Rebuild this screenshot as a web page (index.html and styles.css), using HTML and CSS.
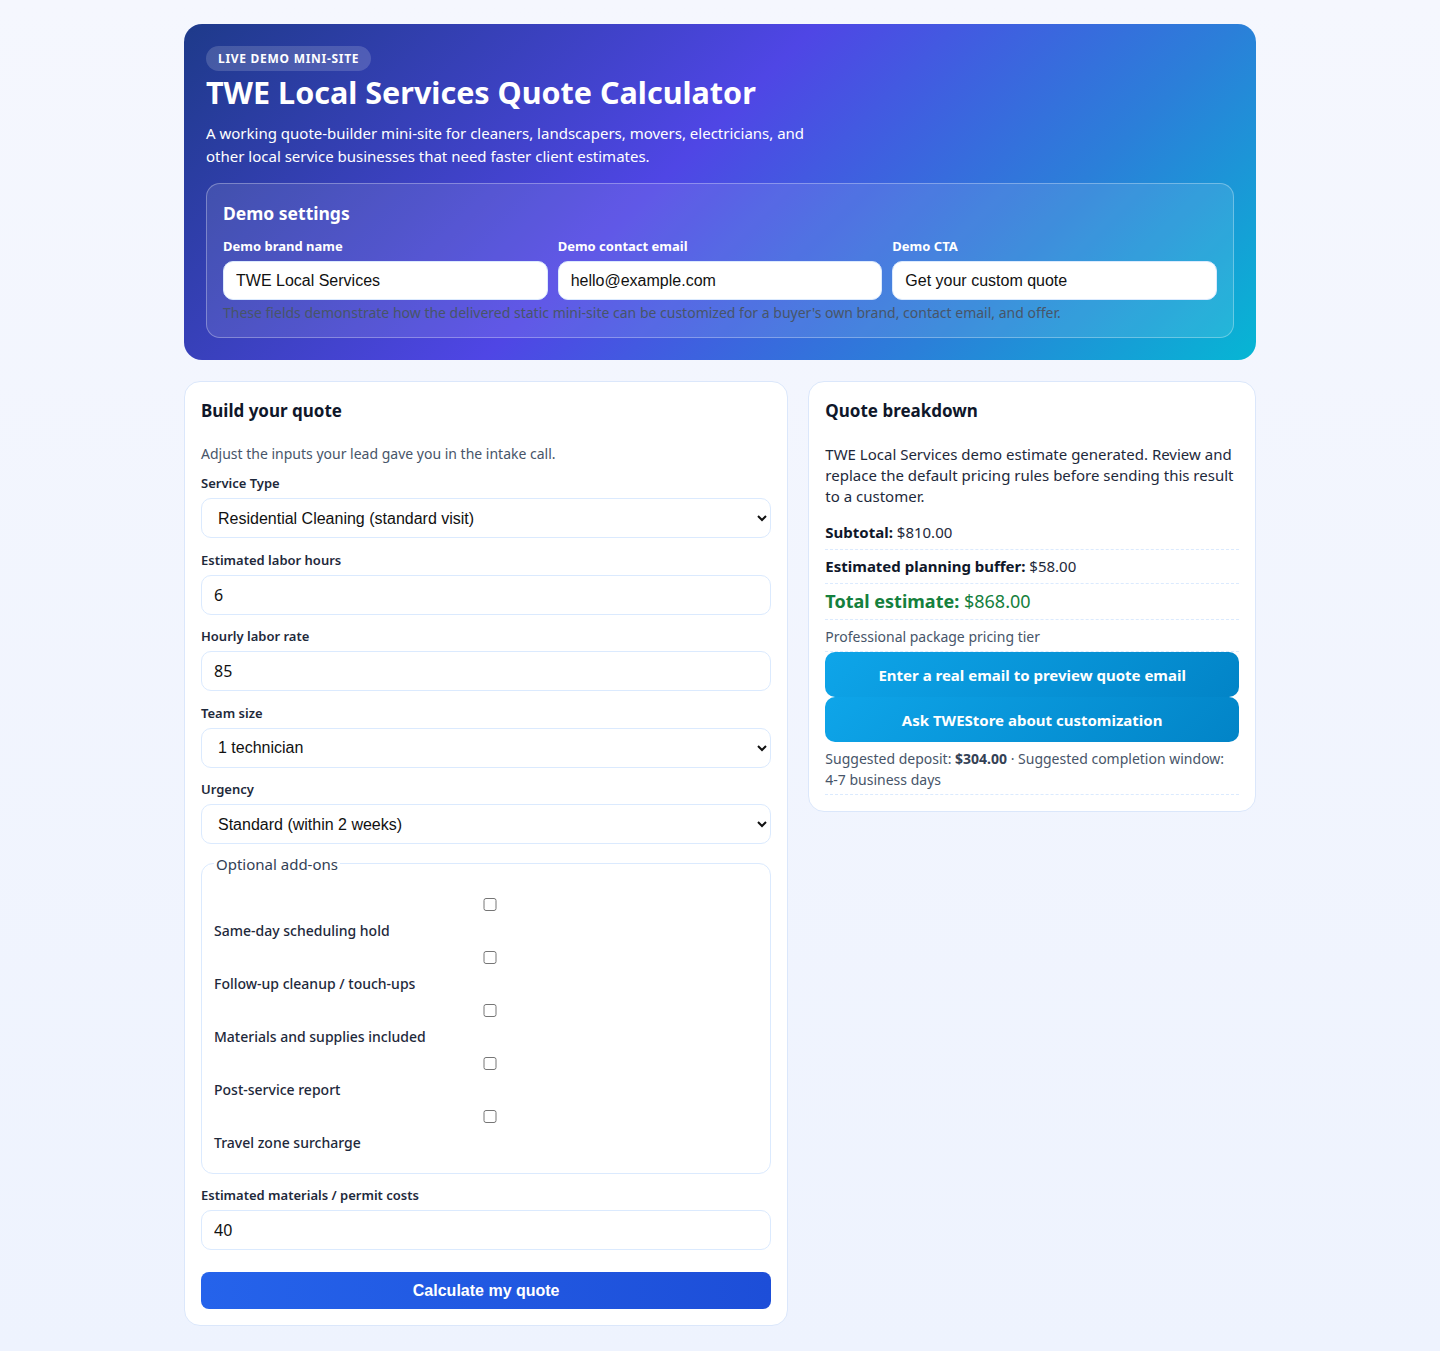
FILE: index.html
```html
<!DOCTYPE html>
<html lang="en">
<head>
  <meta charset="UTF-8">
  <meta name="viewport" content="width=device-width, initial-scale=1.0">
  <title>TWE Local Services Quote Calculator</title>
  <link rel="stylesheet" href="styles.css">
</head>
<body>
<div class="page">
  <header class="hero">
    <span class="badge">LIVE DEMO MINI-SITE</span>
    <h1>TWE Local Services Quote Calculator</h1>
    <p class="lead">A working quote-builder mini-site for cleaners, landscapers, movers, electricians, and other local service businesses that need faster client estimates.</p>

    <div class="settings">
      <h2>Demo settings</h2>
      <div class="settings-grid">
        <label>Demo brand name
          <input type="text" id="brandName" value="TWE Local Services" oninput="calculateQuote()">
        </label>
        <label>Demo contact email
          <input type="text" id="contactEmail" value="hello@example.com">
        </label>
        <label>Demo CTA
          <input type="text" id="ctaText" value="Get your custom quote">
        </label>
      </div>
      <p class="hint">These fields demonstrate how the delivered static mini-site can be customized for a buyer's own brand, contact email, and offer.</p>
    </div>
  </header>

  <main class="layout">
    <section class="card">
      <h3>Build your quote</h3>
      <p class="muted">Adjust the inputs your lead gave you in the intake call.</p>

      <label class="field">Service Type
        <select id="serviceType" onchange="calculateQuote()">
          <option value="1">Residential Cleaning (standard visit)</option>
          <option value="1.2">Deep Cleaning</option>
          <option value="1.1">Landscaping</option>
          <option value="1.3">Moving help</option>
          <option value="1.5">Electrical work</option>
        </select>
      </label>

      <label class="field">Estimated labor hours
        <input type="number" class="num" id="hours" value="6" oninput="calculateQuote()">
      </label>

      <label class="field">Hourly labor rate
        <input type="number" class="num" id="rate" value="85" oninput="calculateQuote()">
      </label>

      <label class="field">Team size
        <select id="team" onchange="calculateQuote()">
          <option value="1">1 technician</option>
          <option value="2">2 technicians</option>
          <option value="3">3 technicians</option>
        </select>
      </label>

      <label class="field">Urgency
        <select id="urgency" onchange="calculateQuote()">
          <option value="1">Standard (within 2 weeks)</option>
          <option value="1.15">Priority (within 1 week)</option>
          <option value="1.35">Rush (within 48 hours)</option>
        </select>
      </label>

      <fieldset class="addons">
        <legend>Optional add-ons</legend>
        <label class="addon"><input type="checkbox" data-cost="75" onchange="calculateQuote()">Same-day scheduling hold</label>
        <label class="addon"><input type="checkbox" data-cost="120" onchange="calculateQuote()">Follow-up cleanup / touch-ups</label>
        <label class="addon"><input type="checkbox" data-cost="90" onchange="calculateQuote()">Materials and supplies included</label>
        <label class="addon"><input type="checkbox" data-cost="35" onchange="calculateQuote()">Post-service report</label>
        <label class="addon"><input type="checkbox" data-cost="50" onchange="calculateQuote()">Travel zone surcharge</label>
      </fieldset>

      <label class="field">Estimated materials / permit costs
        <input type="number" class="num" id="materials" value="40" oninput="calculateQuote()">
      </label>

      <button class="btn-primary" onclick="calculateQuote()">Calculate my quote</button>
    </section>

    <section class="card">
      <h3>Quote breakdown</h3>
      <p class="summary"><span id="brandOut">TWE Local Services</span> demo estimate generated. Review and replace the default pricing rules before sending this result to a customer.</p>
      <div class="row"><strong>Subtotal:</strong> <span id="subtotal">$810.00</span></div>
      <div class="row"><strong>Estimated planning buffer:</strong> <span id="buffer">$58.00</span></div>
      <div class="row total"><strong>Total estimate:</strong> <span id="total">$868.00</span></div>
      <div class="row muted tier">Professional package pricing tier</div>
      <button class="btn-sky">Enter a real email to preview quote email</button>
      <button class="btn-sky">Ask TWEStore about customization</button>
      <div class="row muted deposit">Suggested deposit: <strong id="deposit">$304.00</strong> · Suggested completion window: 4-7 business days</div>
    </section>
  </main>
</div>

<script>
  function money(n) {
    return '$' + n.toFixed(2);
  }

  function calculateQuote() {
    let hours = parseFloat(document.getElementById('hours').value) || 0;
    let rate = parseFloat(document.getElementById('rate').value) || 0;
    let team = parseFloat(document.getElementById('team').value) || 1;
    let service = parseFloat(document.getElementById('serviceType').value) || 1;
    let urgency = parseFloat(document.getElementById('urgency').value) || 1;
    let materials = parseFloat(document.getElementById('materials').value) || 0;

    let addons = 0;
    document.querySelectorAll('.addon input:checked').forEach(box => addons += parseFloat(box.dataset.cost));

    let subtotal = (hours * rate * team * service * urgency) + addons + materials;
    let buffer = Math.round(subtotal * 0.0716);
    let total = subtotal + buffer;

    document.getElementById('subtotal').textContent = money(subtotal);
    document.getElementById('buffer').textContent = money(buffer);
    document.getElementById('total').textContent = money(total);
    document.getElementById('deposit').textContent = money(Math.round(total * 0.35));
    document.getElementById('brandOut').textContent = document.getElementById('brandName').value;
  }
</script>
</body>
</html>
```

FILE: styles.css
```css
body {
  margin: 0;
  font-family: "Noto Sans", "Open Sans", sans-serif;
  color: #1e293b;
  background: linear-gradient(180deg, #f5f7fe 0%, #eef3fe 100%);
  min-height: 100vh;
}
.page {
  max-width: 1072px;
  margin: 0 auto;
  padding: 24px 0 24px;
}

/* hero */
.hero {
  background: linear-gradient(135deg, #1e3a8a 0%, #4f46e5 45%, #2b7fd9 75%, #06b6d4 100%);
  color: white;
  border-radius: 18px;
  padding: 22px 22px 22px;
}
.badge {
  display: inline-block;
  background: rgba(255, 255, 255, 0.16);
  border-radius: 999px;
  padding: 4px 12px;
  font-size: 12px;
  font-weight: 700;
  letter-spacing: 0.06em;
}
.hero h1 {
  margin: 2px 0 11px;
  font-size: 30.5px;
  line-height: 38px;
}
.lead {
  margin: 0 0 15px;
  max-width: 620px;
  font-size: 15px;
  line-height: 23px;
}
.settings {
  background: rgba(255, 255, 255, 0.1);
  border: 1px solid rgba(255, 255, 255, 0.3);
  border-radius: 14px;
  padding: 16px 16px 15px;
}
.settings h2 {
  margin: 0 0 11px;
  font-size: 17.5px;
  line-height: 26px;
}
.settings-grid {
  display: grid;
  grid-template-columns: repeat(3, 1fr);
  gap: 10px;
}
.settings-grid label {
  font-size: 13px;
  font-weight: 700;
}
.settings-grid input {
  display: block;
  width: 100%;
  box-sizing: border-box;
  height: 39px;
  margin-top: 6px;
  padding: 8px 12px;
  border: 1px solid #dbeafe;
  border-radius: 10px;
  font-family: "Liberation Sans", Arial, sans-serif;
  font-size: 16px;
  color: #111;
}
.hint {
  margin: 3px 0 0;
  font-size: 14px;
  color: #475569;
}

/* main columns */
.layout {
  display: grid;
  grid-template-columns: 1.35fr 1fr;
  gap: 20px;
  align-items: start;
  margin-top: 21px;
}
.card {
  background: white;
  border: 1px solid #dbe7fb;
  border-radius: 16px;
  padding: 16px;
}
.card h3 {
  margin: 0 0 20px;
  font-size: 17px;
  line-height: 26px;
  color: #0f172a;
}
.muted {
  color: #475569;
  font-size: 14px;
}
.card > p.muted {
  margin: 0 0 10px;
  line-height: 20px;
}
.field {
  display: block;
  font-size: 13px;
  font-weight: 600;
  line-height: 18px;
  margin-bottom: 12.5px;
}
.field input,
.field select {
  display: block;
  width: 100%;
  box-sizing: border-box;
  height: 40px;
  margin-top: 6px;
  padding: 8px 12px;
  border: 1px solid #dbeafe;
  border-radius: 10px;
  background: white;
  font-family: "Liberation Sans", Arial, sans-serif;
  font-size: 16px;
  color: #111;
}
.field input.num {
  font-family: "Noto Sans", sans-serif;
}

/* add-ons */
.addons {
  border: 1px solid #dbeafe;
  border-radius: 12px;
  margin: -3px 0 12px;
  padding: 6px 12px 20px;
}
.addons legend {
  font-size: 15px;
  padding: 0 2px;
  color: #334155;
}
.addon {
  display: block;
  font-size: 14px;
  font-weight: 500;
  line-height: 20px;
}
.addon input {
  display: block;
  width: calc(100% - 8px);
  height: 13px;
  margin: 18.5px 0 10px 8px;
}
.addon + .addon input {
  margin-top: 10px;
}

.btn-primary {
  display: block;
  width: 100%;
  height: 37px;
  margin-top: 22px;
  border: none;
  border-radius: 8px;
  background: linear-gradient(90deg, #2563eb, #1d4ed8);
  color: white;
  font-family: "Liberation Sans", Arial, sans-serif;
  font-size: 16px;
  font-weight: 700;
}

/* breakdown */
.summary {
  margin: 0 0 9px;
  font-size: 15px;
  line-height: 21px;
  color: #1e293b;
}
.row {
  border-bottom: 1px dashed #dbeafe;
  padding: 6px 0 6px;
  font-size: 15px;
  line-height: 21px;
}
.row strong {
  color: #0f172a;
}
.row.total {
  font-size: 18px;
  line-height: 23px;
  color: #15803d;
}
.row.total strong {
  color: #15803d;
}
.row.muted {
  font-size: 14px;
  color: #475569;
}
.row.tier {
  padding-bottom: 4px;
}
.row.deposit {
  padding-bottom: 4px;
}
.row.muted strong {
  color: #334155;
}
.btn-sky {
  display: block;
  width: 100%;
  height: 45px;
  border: none;
  border-radius: 10px;
  background: linear-gradient(135deg, #0ea5e9, #0284c7);
  color: white;
  font-family: "Noto Sans", sans-serif;
  font-size: 15px;
  font-weight: 700;
}
```
